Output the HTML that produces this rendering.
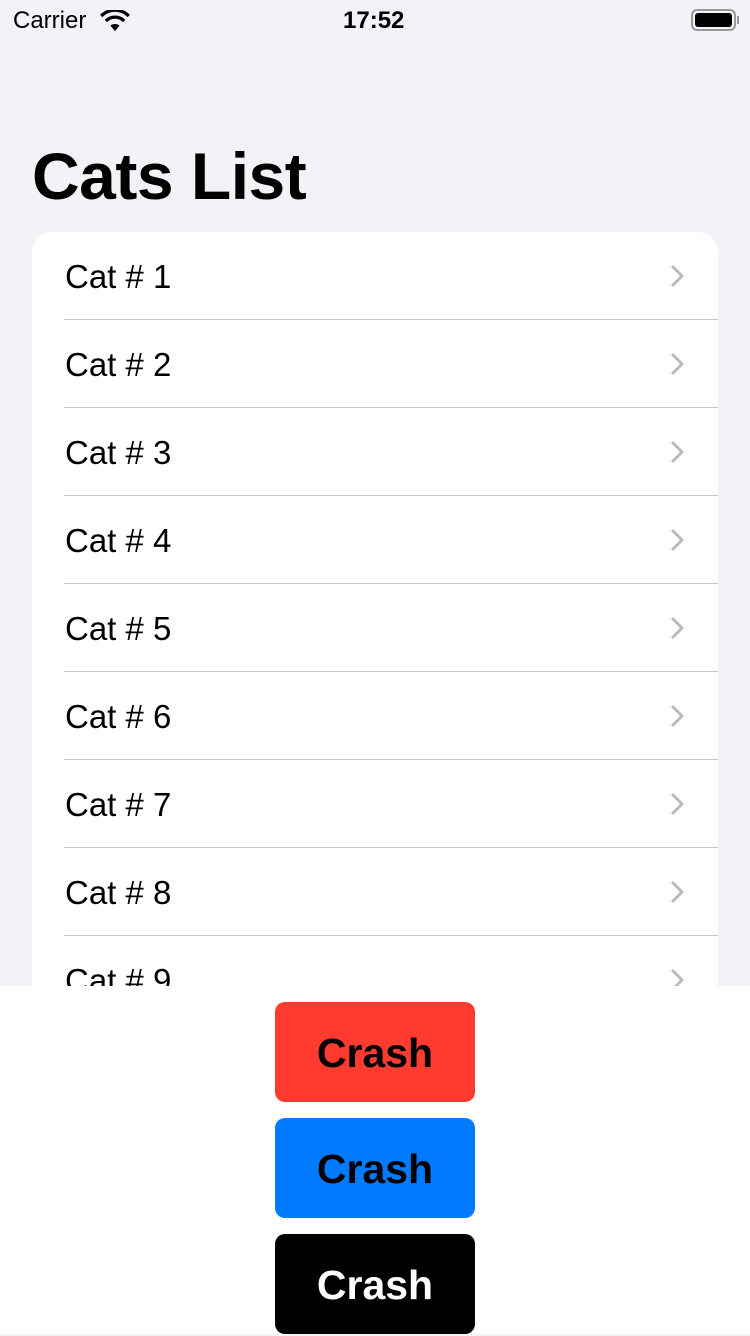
<!DOCTYPE html>
<html><head><style>
*{margin:0;padding:0;box-sizing:border-box}
body{width:750px;height:1334px;background:#f2f2f7;font-family:"Liberation Sans",sans-serif;position:relative;overflow:hidden}
.sb{position:absolute;top:0;left:0;width:750px;height:40px;font-size:24px}
h1{position:absolute;left:32px;top:138px;font-size:66px;font-weight:bold;letter-spacing:-0.5px}
.card{position:absolute;left:32px;top:232px;width:686px;height:800px;background:#fff;border-radius:20px;overflow:hidden}
.row{position:relative;height:88px}
.row span{position:absolute;left:33px;top:26px;font-size:33px;color:#000}
.row::after{content:"";position:absolute;left:32px;right:0;bottom:0;height:1px;background:#c8c8cc}
.row svg{position:absolute;left:635px;top:31px}
.bot{position:absolute;left:0;top:986px;width:750px;height:348px;background:#fff}
.btn{position:absolute;left:275px;width:200px;height:100px;border-radius:10px;font-size:41px;font-weight:bold;text-align:center;line-height:102px}
</style></head><body>
<div class="sb">
<span style="position:absolute;left:13px;top:7px">Carrier</span>
<svg style="position:absolute;left:100px;top:10px" width="30" height="22" viewBox="0 0 32 24"><path d="M16 23 L11 17 A8 8 0 0 1 21 17 Z" fill="#000"/><path d="M6 12 A14 14 0 0 1 26 12" stroke="#000" stroke-width="3.5" fill="none"/><path d="M1 6.5 A21 21 0 0 1 31 6.5" stroke="#000" stroke-width="3.5" fill="none"/></svg>
<span style="position:absolute;left:343px;top:7px;font-weight:bold">17:52</span>
<div style="position:absolute;left:691px;top:9px;width:45px;height:22px;border:2px solid #999;border-radius:6px;padding:2px"><div style="width:100%;height:100%;background:#000;border-radius:3px"></div></div>
<div style="position:absolute;left:737px;top:16px;width:2px;height:8px;background:#999"></div>
</div>
<h1>Cats List</h1>
<div class="card">
<div class="row"><span>Cat # 1</span><svg width="20" height="26" viewBox="0 0 20 26"><path d="M5 3 L15 13 L5 23" stroke="#bcbcc0" stroke-width="3" fill="none"/></svg></div>
<div class="row"><span>Cat # 2</span><svg width="20" height="26" viewBox="0 0 20 26"><path d="M5 3 L15 13 L5 23" stroke="#bcbcc0" stroke-width="3" fill="none"/></svg></div>
<div class="row"><span>Cat # 3</span><svg width="20" height="26" viewBox="0 0 20 26"><path d="M5 3 L15 13 L5 23" stroke="#bcbcc0" stroke-width="3" fill="none"/></svg></div>
<div class="row"><span>Cat # 4</span><svg width="20" height="26" viewBox="0 0 20 26"><path d="M5 3 L15 13 L5 23" stroke="#bcbcc0" stroke-width="3" fill="none"/></svg></div>
<div class="row"><span>Cat # 5</span><svg width="20" height="26" viewBox="0 0 20 26"><path d="M5 3 L15 13 L5 23" stroke="#bcbcc0" stroke-width="3" fill="none"/></svg></div>
<div class="row"><span>Cat # 6</span><svg width="20" height="26" viewBox="0 0 20 26"><path d="M5 3 L15 13 L5 23" stroke="#bcbcc0" stroke-width="3" fill="none"/></svg></div>
<div class="row"><span>Cat # 7</span><svg width="20" height="26" viewBox="0 0 20 26"><path d="M5 3 L15 13 L5 23" stroke="#bcbcc0" stroke-width="3" fill="none"/></svg></div>
<div class="row"><span>Cat # 8</span><svg width="20" height="26" viewBox="0 0 20 26"><path d="M5 3 L15 13 L5 23" stroke="#bcbcc0" stroke-width="3" fill="none"/></svg></div>
<div class="row"><span>Cat # 9</span><svg width="20" height="26" viewBox="0 0 20 26"><path d="M5 3 L15 13 L5 23" stroke="#bcbcc0" stroke-width="3" fill="none"/></svg></div>
</div>
<div class="bot"></div>
<div class="btn" style="top:1002px;background:#ff3b30;color:#000">Crash</div>
<div class="btn" style="top:1118px;background:#007aff;color:#000">Crash</div>
<div class="btn" style="top:1234px;background:#000;color:#fff">Crash</div>
</body></html>
